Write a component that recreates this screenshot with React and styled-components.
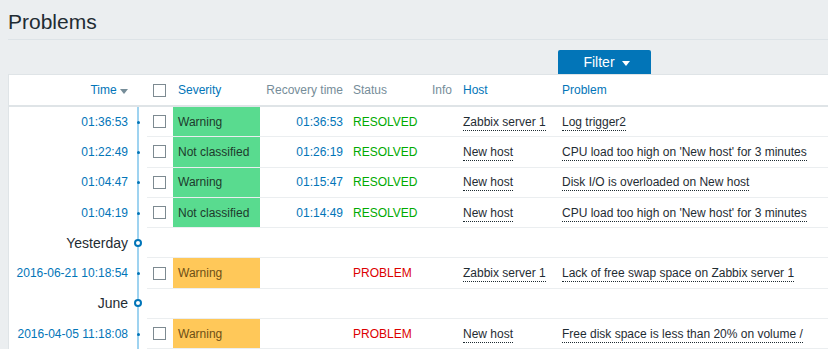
import React from "react";
import styled, { createGlobalStyle } from "styled-components";

const GlobalStyle = createGlobalStyle`
  html, body {
    margin: 0;
    padding: 0;
    background: #ebeef0;
    font-family: "Liberation Sans", Arial, sans-serif;
    font-size: 12px;
    color: #1f2c33;
  }
  body {
    width: 828px;
    overflow: hidden;
  }
`;

const Page = styled.div`
  width: 820px;
  padding: 0 0 0 8px;
`;

const Header = styled.div`
  height: 39px;
  border-bottom: 1px solid #dde3e7;
  display: flex;
  align-items: flex-start;
`;

const Title = styled.h1`
  margin: 10px 0 0;
  font-size: 21px;
  font-weight: normal;
  line-height: 24px;
  color: #1f2c33;
`;

const TabBar = styled.div`
  display: flex;
  padding: 10px 0 0 550px;
`;

const FilterTab = styled.button`
  width: 93px;
  height: 24px;
  border: none;
  border-radius: 2px 2px 0 0;
  background: #0275b8;
  color: #fff;
  font-family: inherit;
  font-size: 14px;
  display: flex;
  align-items: center;
  justify-content: center;
  gap: 7px;
  padding: 0 0 0 4px;
  cursor: pointer;
`;

const Caret = styled.span`
  width: 0;
  height: 0;
  border-left: 4px solid transparent;
  border-right: 4px solid transparent;
  border-top: 5px solid ${({ color }) => color || "#fff"};
  display: inline-block;
  margin-top: 2px;
`;

const Panel = styled.div`
  width: 820px;
  background: #fff;
  border-top: 1px solid #dfe4e7;
  border-left: 1px solid #dfe4e7;
  box-sizing: border-box;
`;

const Table = styled.table`
  border-collapse: collapse;
  width: 819px;
  table-layout: fixed;
  white-space: nowrap;
  background: #fff;
`;

const Th = styled.th`
  height: 30px;
  padding: 0 5px;
  font-weight: normal;
  text-align: ${({ right }) => (right ? "right" : "left")};
  color: ${({ link }) => (link ? "#0275b8" : "#768d99")};
  border-bottom: 2px solid #dfe4e7;
  vertical-align: middle;
`;

const Td = styled.td`
  height: 29.3px;
  padding: 0 5px;
  text-align: ${({ right }) => (right ? "right" : "left")};
  border-bottom: ${({ plain }) => (plain ? "none" : "1px solid #ebeef0")};
  vertical-align: middle;
`;

const TimeCell = styled(Td)`
  color: ${({ label }) => (label ? "#1f2c33" : "#0275b8")};
  font-size: ${({ label }) => (label ? "14px" : "12px")};
`;

const LineCell = styled.td`
  padding: 0;
  position: relative;
  &::before {
    content: "";
    position: absolute;
    left: 4px;
    top: 0;
    bottom: -1px;
    width: 2px;
    background: #9fd3f0;
  }
`;

const Dot = styled.span`
  position: absolute;
  left: 4px;
  top: 50%;
  width: 3px;
  height: 3px;
  margin-top: -1px;
  border-radius: 50%;
  background: #0275b8;
`;

const Ring = styled.span`
  position: absolute;
  left: 1px;
  top: 50%;
  width: 4px;
  height: 4px;
  margin-top: -4px;
  border-radius: 50%;
  border: 2px solid #0275b8;
  background: #fff;
`;

const Check = styled.span`
  display: block;
  width: 11px;
  height: 11px;
  border: 1px solid #7d8a91;
  background: #fff;
`;

const CheckCell = styled(Td)`
  padding: 0 0 0 6px;
`;

const SevCell = styled(Td)`
  background: ${({ sev }) => (sev === "ok" ? "#59db8f" : "#ffc859")};
  color: ${({ sev }) => (sev === "ok" ? "#1d3a2c" : "#6e4f16")};
`;

const Recovery = styled(Td)`
  color: #0275b8;
`;

const Status = styled(Td)`
  color: ${({ resolved }) => (resolved ? "#00aa00" : "#dc0000")};
`;

const Dotted = styled.span`
  color: #1f2c33;
  border-bottom: 1px dotted #1f2c33;
  padding-bottom: 1px;
`;

const rows = [
  { type: "event", time: "01:36:53", sev: "ok", sevText: "Warning", rec: "01:36:53", host: "Zabbix server 1", problem: "Log trigger2" },
  { type: "event", time: "01:22:49", sev: "ok", sevText: "Not classified", rec: "01:26:19", host: "New host", problem: "CPU load too high on 'New host' for 3 minutes" },
  { type: "event", time: "01:04:47", sev: "ok", sevText: "Warning", rec: "01:15:47", host: "New host", problem: "Disk I/O is overloaded on New host" },
  { type: "event", time: "01:04:19", sev: "ok", sevText: "Not classified", rec: "01:14:49", host: "New host", problem: "CPU load too high on 'New host' for 3 minutes" },
  { type: "label", text: "Yesterday" },
  { type: "event", time: "2016-06-21 10:18:54", sev: "warn", sevText: "Warning", host: "Zabbix server 1", problem: "Lack of free swap space on Zabbix server 1" },
  { type: "label", text: "June" },
  { type: "event", time: "2016-04-05 11:18:08", sev: "warn", sevText: "Warning", host: "New host", problem: "Free disk space is less than 20% on volume /" },
];

function Row({ row }) {
  if (row.type === "label") {
    return (
      <tr>
        <TimeCell right plain label="1">{row.text}</TimeCell>
        <LineCell>
          <Ring />
        </LineCell>
        <Td colSpan={7} />
      </tr>
    );
  }
  const resolved = Boolean(row.rec);
  return (
    <tr>
      <TimeCell right plain>{row.time}</TimeCell>
      <LineCell>
        <Dot />
      </LineCell>
      <CheckCell>
        <Check />
      </CheckCell>
      <SevCell sev={row.sev}>{row.sevText}</SevCell>
      <Recovery right>{row.rec}</Recovery>
      <Status resolved={resolved}>{resolved ? "RESOLVED" : "PROBLEM"}</Status>
      <Td />
      <Td>
        <Dotted>{row.host}</Dotted>
      </Td>
      <Td>
        <Dotted>{row.problem}</Dotted>
      </Td>
    </tr>
  );
}

export default function App() {
  return (
    <Page>
      <GlobalStyle />
      <Header>
        <Title>Problems</Title>
      </Header>
      <TabBar>
        <FilterTab>
          Filter <Caret />
        </FilterTab>
      </TabBar>
      <Panel>
        <Table>
          <colgroup>
            <col style={{ width: 124 }} />
            <col style={{ width: 14 }} />
            <col style={{ width: 26 }} />
            <col style={{ width: 87 }} />
            <col style={{ width: 88 }} />
            <col style={{ width: 79 }} />
            <col style={{ width: 31 }} />
            <col style={{ width: 99 }} />
            <col style={{ width: 271 }} />
          </colgroup>
          <thead>
            <tr>
              <Th right link>
                Time <Caret color="#768d99" />
              </Th>
              <Th style={{ padding: 0 }} />
              <Th style={{ padding: "0 0 0 6px" }}>
                <Check />
              </Th>
              <Th link>Severity</Th>
              <Th right>Recovery time</Th>
              <Th>Status</Th>
              <Th>Info</Th>
              <Th link>Host</Th>
              <Th link>Problem</Th>
            </tr>
          </thead>
          <tbody>
            {rows.map((r, i) => (
              <Row key={i} row={r} />
            ))}
          </tbody>
        </Table>
      </Panel>
    </Page>
  );
}
